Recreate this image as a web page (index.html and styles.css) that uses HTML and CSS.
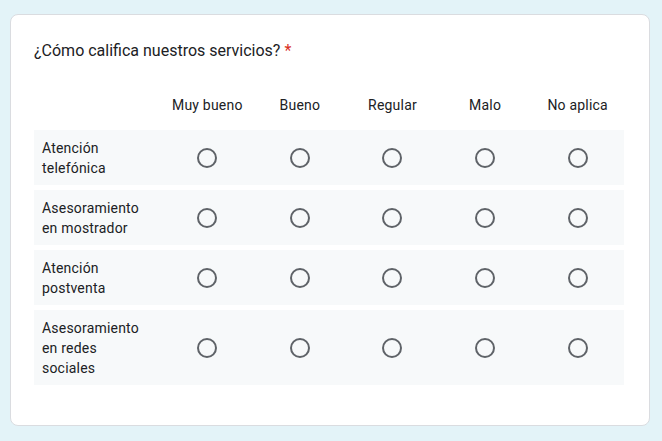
FILE: index.html
```html
<!DOCTYPE html>
<html lang="es">
<head>
<meta charset="utf-8">
<title>Encuesta</title>
<link rel="stylesheet" href="styles.css">
</head>
<body>
<div class="card">
  <div class="title">¿Cómo califica nuestros servicios?<span class="req">*</span></div>
  <div class="grid">
    <div class="head">
      <div></div>
      <div class="col">Muy bueno</div>
      <div class="col">Bueno</div>
      <div class="col">Regular</div>
      <div class="col">Malo</div>
      <div class="col">No aplica</div>
    </div>
    <div class="row">
      <div class="label">Atención telefónica</div>
      <div class="cell"><span class="radio"></span></div>
      <div class="cell"><span class="radio"></span></div>
      <div class="cell"><span class="radio"></span></div>
      <div class="cell"><span class="radio"></span></div>
      <div class="cell"><span class="radio"></span></div>
    </div>
    <div class="row">
      <div class="label">Asesoramiento en mostrador</div>
      <div class="cell"><span class="radio"></span></div>
      <div class="cell"><span class="radio"></span></div>
      <div class="cell"><span class="radio"></span></div>
      <div class="cell"><span class="radio"></span></div>
      <div class="cell"><span class="radio"></span></div>
    </div>
    <div class="row">
      <div class="label">Atención postventa</div>
      <div class="cell"><span class="radio"></span></div>
      <div class="cell"><span class="radio"></span></div>
      <div class="cell"><span class="radio"></span></div>
      <div class="cell"><span class="radio"></span></div>
      <div class="cell"><span class="radio"></span></div>
    </div>
    <div class="row">
      <div class="label">Asesoramiento en redes sociales</div>
      <div class="cell"><span class="radio"></span></div>
      <div class="cell"><span class="radio"></span></div>
      <div class="cell"><span class="radio"></span></div>
      <div class="cell"><span class="radio"></span></div>
      <div class="cell"><span class="radio"></span></div>
    </div>
  </div>
</div>
</body>
</html>
```
FILE: styles.css
```css
html, body {
  margin: 0;
  background: #e3f3f8;
}
body {
  padding: 14px 12px 0 10px;
  font-family: Roboto, "Liberation Sans", Arial, sans-serif;
  color: #202124;
}
.card {
  box-sizing: border-box;
  width: 640px;
  background: #fff;
  border: 1px solid #dadce0;
  border-radius: 8px;
  padding: 24px 25px 40px 23px;
}
.title {
  font-size: 16px;
  line-height: 24px;
}
.req {
  color: #d93025;
  margin-left: 4px;
}
.grid {
  margin-top: 22px;
  display: flex;
  flex-direction: column;
  gap: 5px;
}
.head, .row {
  display: grid;
  grid-template-columns: 127px repeat(5, 1fr);
  align-items: center;
}
.head {
  height: 40px;
  font-size: 14px;
  line-height: 20px;
  letter-spacing: 0.2px;
}
.col {
  text-align: center;
}
.row {
  background: #f7f9fa;
  padding: 8px 0 7px;
  font-size: 14px;
  line-height: 20px;
  letter-spacing: 0.2px;
}
.label {
  padding: 0 8px;
}
.cell {
  display: flex;
  justify-content: center;
}
.radio {
  box-sizing: border-box;
  width: 20px;
  height: 20px;
  border: 2px solid #5f6368;
  border-radius: 50%;
}
```
